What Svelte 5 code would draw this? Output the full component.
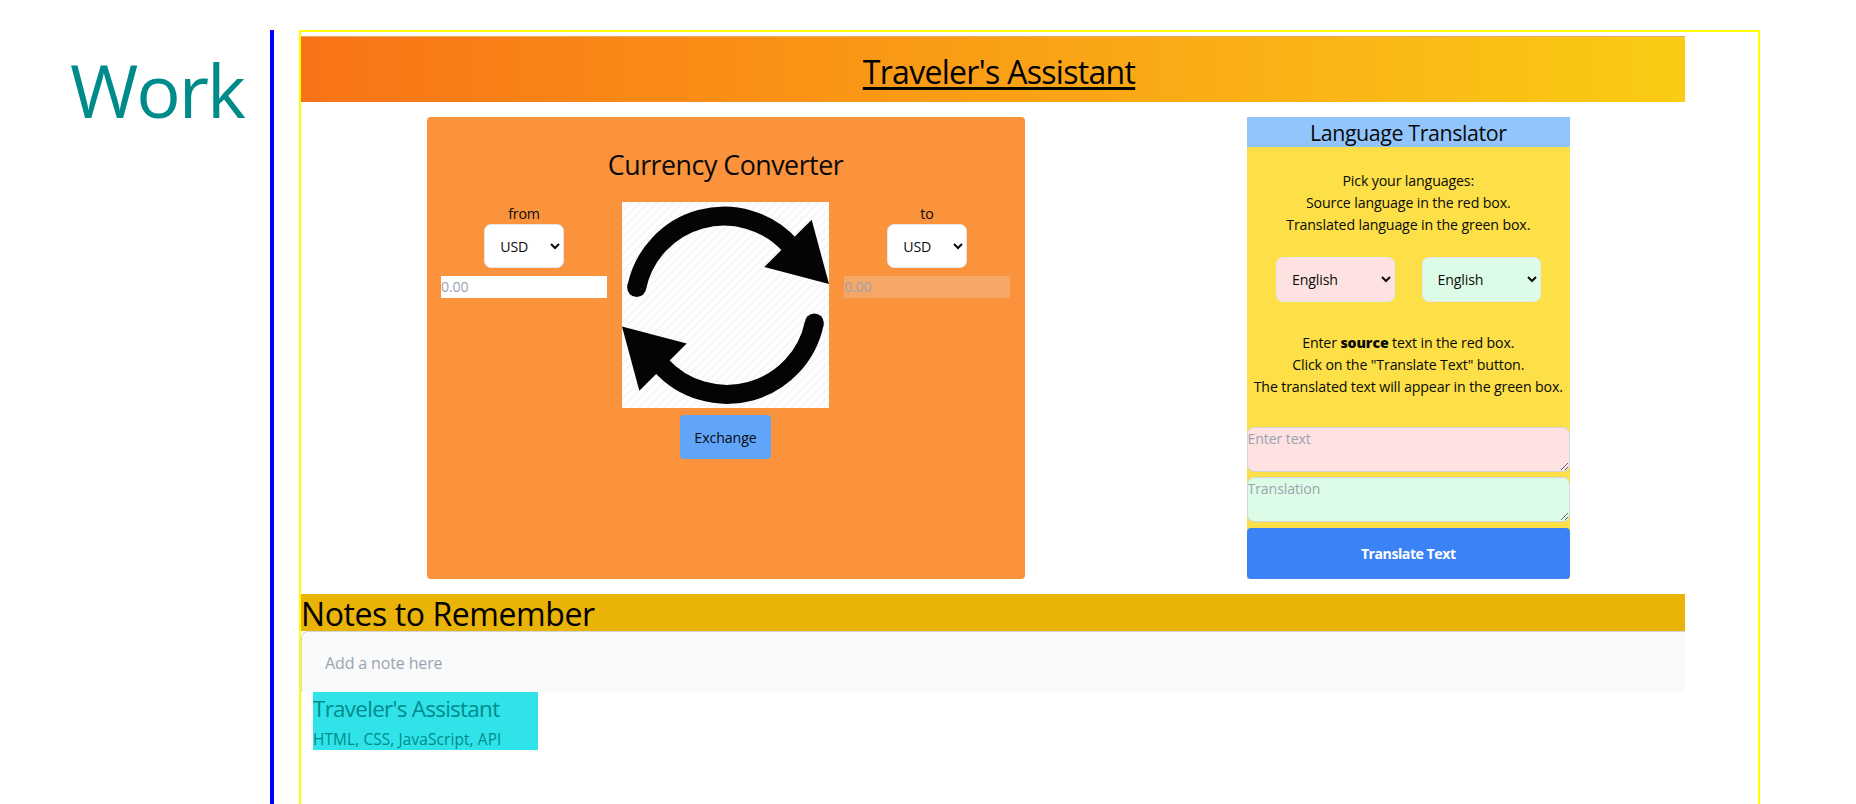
<script>
  const currencies = ['USD', 'EUR', 'GBP', 'JPY'];
  const languages = ['English', 'Spanish', 'French', 'German'];
</script>

<div class="page">
  <aside><h1>Work</h1></aside>
  <section class="frame">
    <div class="app">
      <header><span>Traveler's Assistant</span></header>
      <main>
        <div class="currency">
          <h2>Currency Converter</h2>
          <div class="columns">
            <div class="side">
              <label for="from">from</label>
              <select id="from">{#each currencies as c}<option>{c}</option>{/each}</select>
              <input placeholder="0.00" />
            </div>
            <div class="middle">
              <svg class="swap" viewBox="0 0 621 619" preserveAspectRatio="none">
                <defs>
                  <pattern id="stripes" width="18" height="18" patternUnits="userSpaceOnUse" patternTransform="rotate(45)">
                    <rect width="18" height="18" fill="#fefefe" />
                    <rect width="7" height="18" fill="#f7f7f7" />
                  </pattern>
                  <g id="arrow">
                    <path d="M44 257A267.4 267.4 0 0 1 505 131" fill="none" stroke="#040404" stroke-width="57" />
                    <circle cx="44" cy="256" r="28.5" fill="#040404" />
                    <path d="M569 53L621 246L427 195Z" fill="#040404" />
                  </g>
                </defs>
                <rect width="621" height="619" fill="url(#stripes)" />
                <use href="#arrow" />
                <use href="#arrow" transform="rotate(180 310.5 309.5)" />
              </svg>
              <button class="exchange">Exchange</button>
            </div>
            <div class="side">
              <label for="to">to</label>
              <select id="to">{#each currencies as c}<option>{c}</option>{/each}</select>
              <input placeholder="0.00" disabled />
            </div>
          </div>
        </div>
        <div class="translator">
          <h3>Language Translator</h3>
          <p class="pick">Pick your languages:<br />Source language in the red box.<br />Translated language in the green box.</p>
          <div class="langs">
            <select class="red" aria-label="Source language">{#each languages as l}<option>{l}</option>{/each}</select>
            <select class="green" aria-label="Target language">{#each languages as l}<option>{l}</option>{/each}</select>
          </div>
          <p class="steps">Enter <b>source</b> text in the red box.<br />Click on the "Translate Text" button.<br />The translated text will appear in the green box.</p>
          <textarea class="red" placeholder="Enter text"></textarea>
          <textarea class="green" placeholder="Translation"></textarea>
          <button class="translate">Translate Text</button>
        </div>
      </main>
      <h2 class="notes">Notes to Remember</h2>
      <input class="note" placeholder="Add a note here" />
    </div>
    <div class="caption">
      <h3>Traveler's Assistant</h3>
      <p>HTML, CSS, JavaScript, API</p>
    </div>
  </section>
</div>

<style>
  :global(body) { background: #fff; overflow: hidden; }
  * { box-sizing: border-box; }
  h1, h2, h3, p { margin: 0; font-weight: 400; }
  .page {
    display: flex;
    height: 804px;
    padding-top: 30px;
    font-family: "Open Sans", "Noto Sans", sans-serif;
    font-size: 14.2px;
    line-height: 22px;
    letter-spacing: -0.14px;
    color: #0a0a0a;
    overflow: hidden;
  }
  aside {
    width: 274px;
    border-right: 4px solid #00f;
    padding: 10px 26px 0 0;
    text-align: right;
    flex: none;
  }
  h1 { color: #008b8b; font-size: 74px; line-height: 100px; letter-spacing: -2px; }
  .frame {
    margin-left: 25px;
    width: 1461px;
    height: 900px;
    border: 2px solid #ff0;
    padding-top: 4px;
    flex: none;
  }
  .app { width: 1384px; }
  header {
    height: 66px;
    margin-bottom: 15px;
    background: linear-gradient(to right, #f97316, #facc15);
    border-top: 1px solid #f0a860;
    display: flex;
    justify-content: center;
    padding: 15px 0 0 12px;
  }
  header span {
    font-size: 32px;
    line-height: 40px;
    letter-spacing: -0.7px;
    text-decoration: underline;
    text-decoration-thickness: 2.5px;
    text-underline-offset: 3px;
    color: #000;
  }
  main { display: flex; padding-left: 125.5px; height: 462px; }
  .currency {
    width: 598px;
    background: #fb923c;
    border-radius: 4px;
    padding: 30px 14.5px 0;
  }
  .currency h2 {
    text-align: center;
    font-size: 26.8px;
    line-height: 36px;
    letter-spacing: -0.5px;
    margin-bottom: 18.5px;
  }
  .columns { display: flex; justify-content: space-between; }
  .side { width: 166px; display: flex; flex-direction: column; align-items: center; }
  .side label { height: 22px; line-height: 24px; }
  select, input, textarea, button { font: inherit; letter-spacing: inherit; color: inherit; margin: 0; }
  select {
    height: 44.5px;
    border: 1px solid #e5e7eb;
    border-radius: 7px;
    background: #fff;
  }
  .side select { width: 79.5px; padding: 1px 0 0 11px; }
  .side input {
    width: 100%;
    height: 22px;
    margin-top: 7.5px;
    border: 0;
    padding: 0;
    background: #fff;
  }
  .side input:disabled { background: rgba(229, 231, 235, 0.25); }
  ::placeholder { color: #9ca3af; opacity: 1; }
  .middle { display: flex; flex-direction: column; align-items: center; }
  .swap { width: 207px; height: 206.5px; display: block; }
  .exchange {
    width: 91px;
    height: 44px;
    margin-top: 6.5px;
    border: 0;
    padding: 2px 0 0;
    border-radius: 4px;
    background: #60a5fa;
    letter-spacing: -0.1px;
  }
  .translator {
    margin-left: 222px;
    width: 323.5px;
    background: #fde047;
    text-align: center;
    display: flex;
    flex-direction: column;
  }
  .translator h3 {
    height: 29.5px;
    background: #93c5fd;
    font-size: 21.4px;
    line-height: 31px;
    letter-spacing: -0.4px;
  }
  .pick { padding-top: 23px; height: 110.5px; }
  .langs { display: flex; justify-content: space-between; padding: 0 29.5px; }
  .langs select { width: 119px; padding-left: 11px; }
  .red, .langs .red { background: #fee2e2; }
  .green, .langs .green { background: #dcfce7; }
  .steps { padding-top: 30px; height: 125px; }
  .steps b { font-weight: 800; }
  textarea {
    width: 100%;
    height: 45px;
    padding: 0;
    margin-bottom: 5.5px;
    border: 1px solid #d1d5db;
    border-radius: 7px;
    flex: none;
  }
  .translate {
    flex: 1;
    border: 0;
    padding: 1px 0 0;
    border-radius: 4px;
    background: #3b82f6;
    color: #fff;
    font-weight: 700;
    letter-spacing: -0.5px;
  }
  .notes {
    margin-top: 15px;
    height: 36.5px;
    background: #eab308;
    font-size: 32px;
    line-height: 40px;
    letter-spacing: -0.42px;
    color: #000;
  }
  .note {
    display: block;
    width: 100%;
    height: 61.5px;
    border: 1px solid #d1d5db;
    border-width: 1px 0 0 1px;
    border-radius: 7px 0 0 0;
    background: #f9fafb;
    padding: 2px 0 0 23px;
    font-size: 16px;
  }
  .caption {
    margin-left: 12px;
    width: 225px;
    height: 58px;
    background: #30e3e9;
    color: #008b8b;
  }
  .caption h3 { font-size: 22.4px; line-height: 34px; letter-spacing: -0.7px; }
  .caption p { font-size: 15.4px; line-height: 28px; letter-spacing: 0.12px; }
</style>
